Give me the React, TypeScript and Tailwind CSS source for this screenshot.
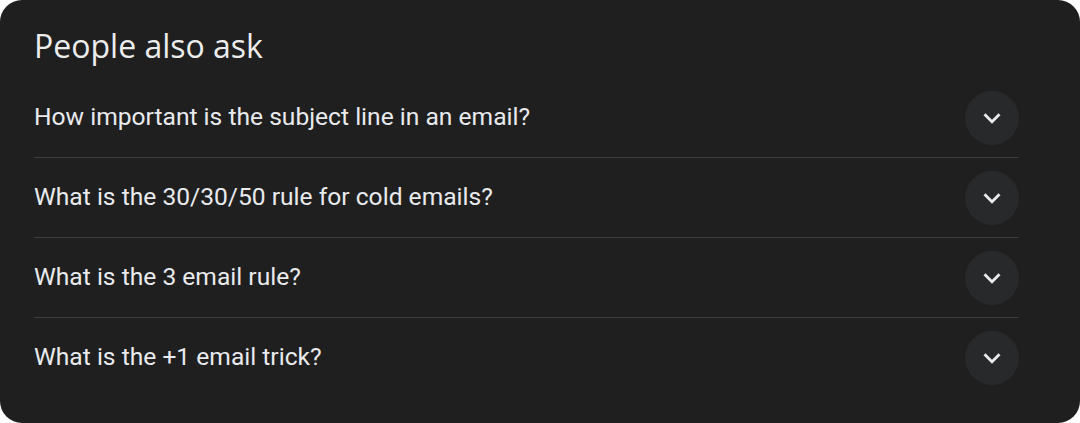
import React from "react";

const questions = [
  "How important is the subject line in an email?",
  "What is the 30/30/50 rule for cold emails?",
  "What is the 3 email rule?",
  "What is the +1 email trick?",
];

function Chevron() {
  return (
    <svg width="34" height="34" viewBox="0 0 24 24">
      <path d="M16.59 8.59L12 13.17 7.41 8.59 6 10l6 6 6-6z" fill="#e8eaed" />
    </svg>
  );
}

export default function App() {
  return (
    <div className="w-[1080px] h-[423px] bg-white">
      <div className="w-full h-full bg-[#1f1f1f] rounded-[22px] pl-[34px] pr-[61px] pt-[24px] flex flex-col" style={{ fontFamily: "Roboto, 'Liberation Sans', sans-serif" }}>
        <div className="h-[43px] text-[32px] leading-[43px] text-[#ececec]" style={{ fontFamily: "'Open Sans', Roboto, sans-serif" }}>
          People also ask
        </div>
        <div className="mt-[11px] flex flex-col">
          {questions.map((q, i) => (
            <div key={i} className={`h-[80px] flex items-center justify-between ${i < questions.length - 1 ? "border-b border-[#3c3c3c]" : ""}`}>
              <span className="text-[24.6px] text-[#e8eaed] -mt-[1px]">{q}</span>
              <div className="w-[54px] h-[54px] rounded-full bg-[#28292b] flex items-center justify-center">
                <Chevron />
              </div>
            </div>
          ))}
        </div>
      </div>
    </div>
  );
}
